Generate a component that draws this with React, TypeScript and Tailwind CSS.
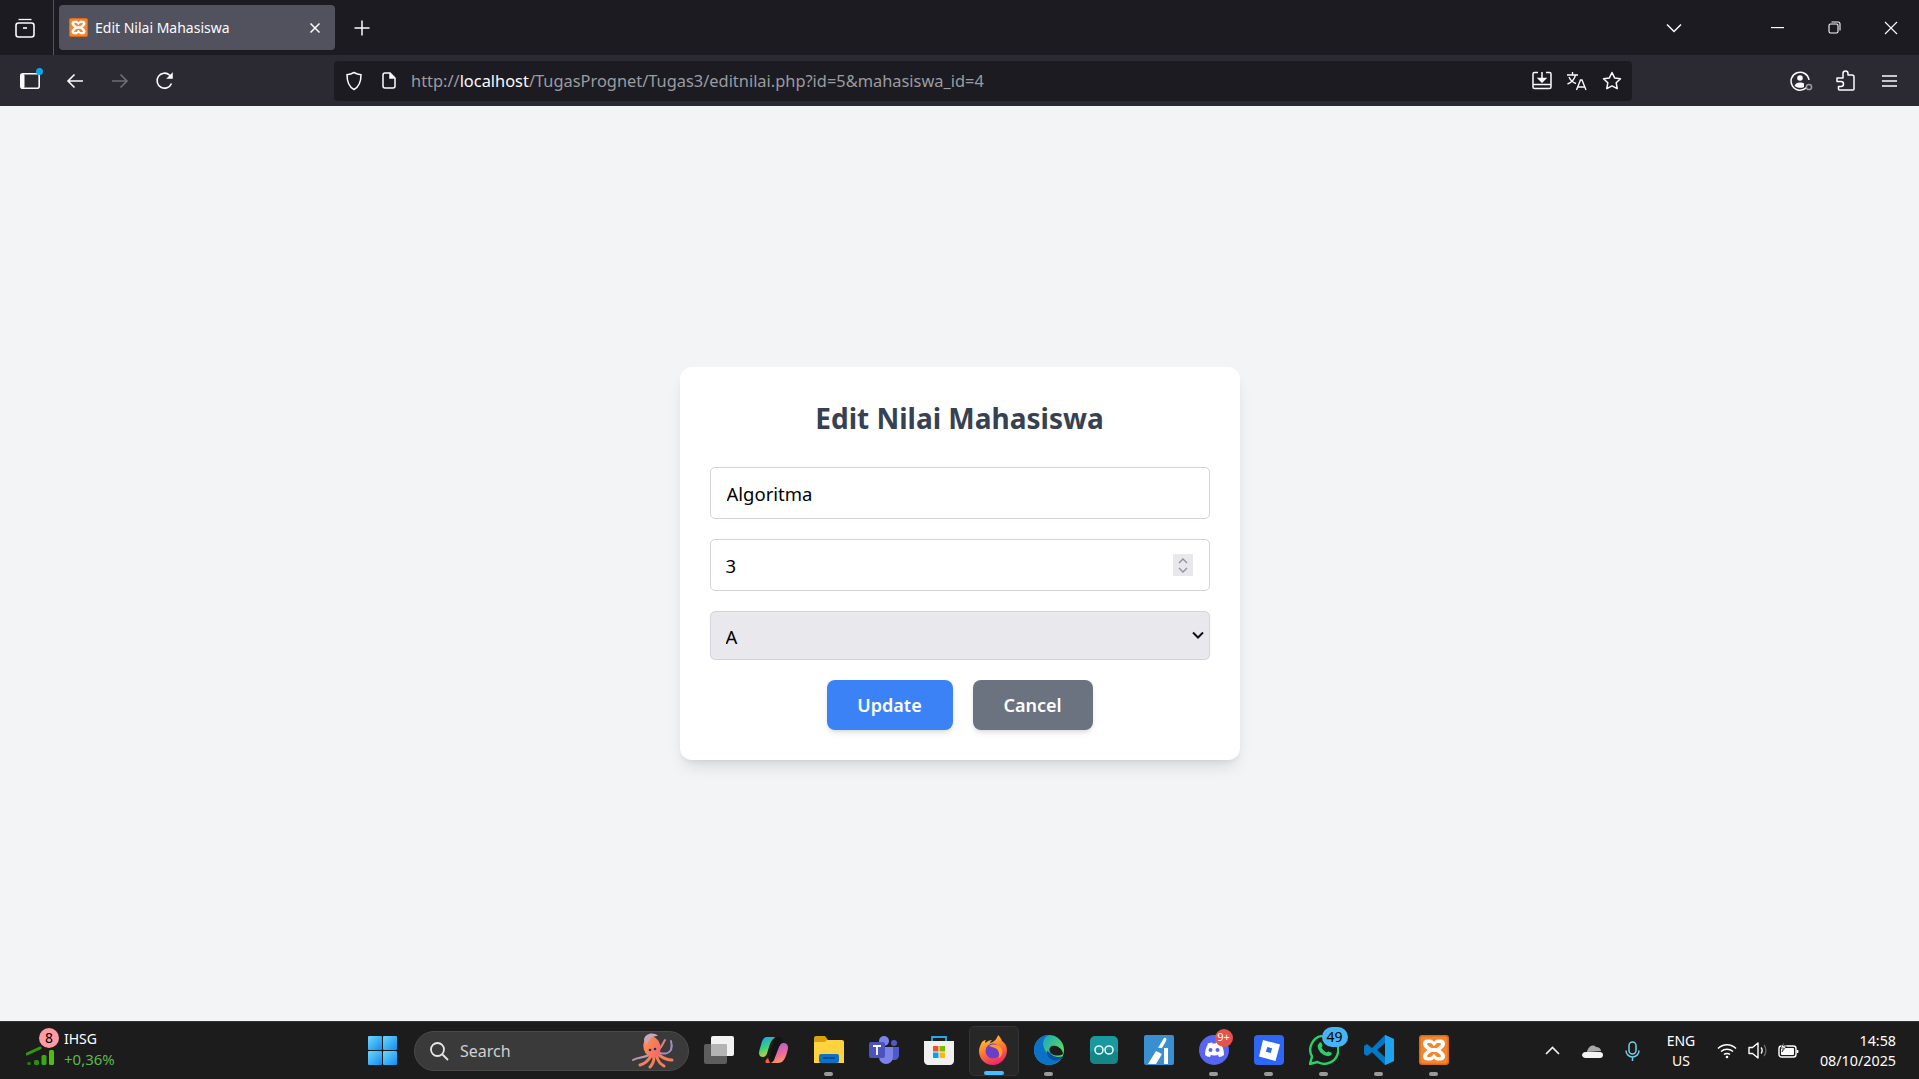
import { useState } from "react";

const uiFont = "font-['Noto_Sans','Open_Sans',sans-serif]";

function XamppIcon({ size }: { size: number }) {
  return (
    <svg width={size} height={size} viewBox="0 0 30 30">
      <rect x="0" y="0" width="30" height="30" rx="3" fill="#d96a1c" />
      <rect x="1.500" y="1.500" width="27" height="27" rx="2" fill="#f4862c" />
      <path d="M8 4.500h3.500c1.600 0 2.400 1 3.500 2.300 1.100-1.300 1.900-2.300 3.500-2.300H22c2.400 0 4 1.900 4 4.200 0 2.700-2.600 4.900-4.500 6.300 1.900 1.400 4.500 3.600 4.500 6.300 0 2.300-1.600 4.200-4 4.200h-3.500c-1.600 0-2.400-1-3.500-2.300-1.100 1.300-1.900 2.300-3.500 2.300H8c-2.400 0-4-1.900-4-4.200 0-2.700 2.600-4.900 4.500-6.300C6.600 13.600 4 11.400 4 8.700c0-2.300 1.600-4.200 4-4.200z" fill="#fff" />
      <path d="M9 8h2.500c1.200 0 2 1.500 3.500 3.300C16.500 9.500 17.300 8 18.500 8H21c1 0 1.300 1.200.5 2-1 1.200-2.500 2.200-3.800 3h-5.400c-1.300-.8-2.800-1.800-3.800-3-.8-.8-.5-2 .5-2z" fill="#f4862c" />
      <path d="M9 22h2.500c1.200 0 2-1.500 3.500-3.300 1.500 1.800 2.300 3.300 3.500 3.300H21c1 0 1.300-1.200.5-2-1-1.200-2.500-2.200-3.800-3h-5.400c-1.300.8-2.800 1.800-3.800 3-.8.8-.5 2 .5 2z" fill="#f4862c" />
    </svg>
  );
}

function TabBar() {
  return (
    <div className="flex h-[55px] shrink-0 items-center bg-[#1c1b22]">
      <div className="flex h-full w-[54px] items-center justify-center border-r border-[#55555c]">
        <svg width="22" height="22" viewBox="0 0 22 22" fill="none" stroke="#fbfbfe" strokeWidth="1.600" className="mr-[4px]">
          <path d="M4.500 2.500h13" strokeWidth="1.300" />
          <rect x="2" y="6" width="18" height="14" rx="2.500" />
          <path d="M9 11h4" />
        </svg>
      </div>
      <div className="ml-[5px] flex h-[45px] w-[276px] items-center rounded-[4px] bg-[#52525e] pl-[10px] pr-[14px]">
        <XamppIcon size={19} />
        <span className={`ml-[7px] flex-1 text-[14px] text-[#fbfbfe] ${uiFont}`}>Edit Nilai Mahasiswa</span>
        <svg width="12" height="12" viewBox="0 0 12 12" stroke="#fbfbfe" strokeWidth="1.500">
          <path d="M1.500 1.500l9 9M10.500 1.500l-9 9" />
        </svg>
      </div>
      <div className="ml-[17px] flex w-[20px] justify-center">
        <svg width="16" height="16" viewBox="0 0 16 16" stroke="#fbfbfe" strokeWidth="1.500">
          <path d="M8 0.500v15M0.500 8h15" />
        </svg>
      </div>
      <div className="ml-auto flex items-center">
        <svg width="16" height="10" viewBox="0 0 16 10" fill="none" stroke="#fbfbfe" strokeWidth="1.500">
          <path d="M1 1.500l7 7 7-7" />
        </svg>
        <svg width="13" height="2" viewBox="0 0 13 2" className="ml-[89px]">
          <rect width="13" height="1.200" fill="#fbfbfe" />
        </svg>
        <svg width="13" height="13" viewBox="0 0 13 13" fill="none" stroke="#fbfbfe" strokeWidth="1.100" className="ml-[44px]">
          <rect x="1" y="3" width="9" height="9" rx="1.500" />
          <path d="M3.500 1h6.500c1.200 0 2 .8 2 2v6.500" />
        </svg>
        <svg width="14" height="14" viewBox="0 0 14 14" stroke="#fbfbfe" strokeWidth="1.100" className="ml-[43px] mr-[21px]">
          <path d="M1 1l12 12M13 1L1 13" />
        </svg>
      </div>
    </div>
  );
}

function Toolbar() {
  return (
    <div className="flex h-[51px] shrink-0 items-center bg-[#2b2a33]">
      <div className="relative ml-[20px] h-[16px] w-[20px]">
        <svg width="20" height="16" viewBox="0 0 20 16">
          <rect x="0.800" y="0.800" width="18.400" height="14.400" rx="2" fill="none" stroke="#fbfbfe" strokeWidth="1.600" />
          <rect x="1" y="1" width="3.500" height="14" rx="1.500" fill="#fbfbfe" />
        </svg>
        <span className="absolute right-[-3px] top-[-5px] h-[7px] w-[7px] rounded-full bg-[#0ea5e9]" />
      </div>
      <svg width="18" height="16" viewBox="0 0 18 16" fill="none" stroke="#fbfbfe" strokeWidth="1.600" className="ml-[26px]">
        <path d="M17 8H2M8.500 1.500L2 8l6.500 6.500" />
      </svg>
      <svg width="18" height="16" viewBox="0 0 18 16" fill="none" stroke="#6f6e75" strokeWidth="1.600" className="ml-[27px]">
        <path d="M1 8h15M9.500 1.500L16 8l-6.500 6.500" />
      </svg>
      <svg width="20" height="20" viewBox="0 0 20 20" fill="none" stroke="#fbfbfe" strokeWidth="1.600" className="ml-[26px]">
        <path d="M16.500 12.500A7.500 7.500 0 1 1 14.500 4L17 6.500" />
        <path d="M17.500 1.500v6h-6" fill="#fbfbfe" strokeWidth="0.500" />
      </svg>
      <div className="ml-[159px] flex h-[40px] w-[1298px] items-center rounded-[4px] bg-[#1c1b22] pl-[11px] pr-[10px]">
        <svg width="18" height="20" viewBox="0 0 18 20" fill="none" stroke="#fbfbfe" strokeWidth="1.500">
          <path d="M9 1.500c2.500 1.500 4.500 2 7 2.200 0 6.500-1 11.500-7 14.800C3 15.200 2 10.200 2 3.700 4.500 3.500 6.500 3 9 1.500z" />
        </svg>
        <svg width="14" height="17" viewBox="0 0 14 17" fill="none" stroke="#fbfbfe" strokeWidth="1.500" className="ml-[19px]">
          <path d="M3 1h5l5 5v8c0 1.200-.8 2-2 2H3c-1.200 0-2-.8-2-2V3c0-1.200.8-2 2-2z" />
          <path d="M8 1v5h5" fill="#fbfbfe" />
        </svg>
        <span className={`ml-[15px] mt-[2px] flex-1 text-[16.400px] text-[#9b9ba0] ${uiFont}`}>
          http://<span className="text-[#fbfbfe]">localhost</span>/TugasPrognet/Tugas3/editnilai.php?id=5&amp;mahasiswa_id=4
        </span>
        <svg width="20" height="19" viewBox="0 0 20 19" fill="none" stroke="#fbfbfe" strokeWidth="1.500">
          <path d="M6 1.500H2.500c-.8 0-1.500.7-1.500 1.500v13c0 .8.700 1.500 1.500 1.500h15c.8 0 1.500-.7 1.500-1.500V3c0-.8-.7-1.500-1.500-1.500H14" />
          <path d="M1 13.500h18M10 1v8" />
          <path d="M6.500 7.500L10 11l3.500-3.500z" fill="#fbfbfe" />
        </svg>
        <svg width="21" height="20" viewBox="0 0 21 20" fill="none" stroke="#fbfbfe" strokeWidth="1.400" className="ml-[14px]">
          <path d="M1 4h11M6.500 1v3M9.500 4c-1 4-4 7.500-8 9M3 6c1.500 3.500 4 5.500 7 6.500" />
          <path d="M10.500 19l4-10h1.500l4 10M12 16h7" />
        </svg>
        <svg width="20" height="19" viewBox="0 0 20 19" fill="none" stroke="#fbfbfe" strokeWidth="1.500" className="ml-[15px]">
          <path d="M10 1.500l2.600 5.400 5.900.8-4.300 4.100 1 5.900L10 14.900l-5.200 2.800 1-5.900L1.500 7.700l5.900-.8z" strokeLinejoin="round" />
        </svg>
      </div>
      <svg width="23" height="21" viewBox="0 0 23 21" fill="none" stroke="#fbfbfe" strokeWidth="1.500" className="ml-[158px]">
        <path d="M16.500 17.500A9 9 0 1 1 19 10" />
        <circle cx="10" cy="8" r="2.800" fill="#fbfbfe" stroke="none" />
        <path d="M4.500 16c.5-2.500 3-3.500 5.500-3.500 1.500 0 3 .3 4 1v3.500c-2.500 1.500-6.500 1-9.500-1z" fill="#fbfbfe" stroke="none" />
        <circle cx="19" cy="17" r="2.600" stroke="#9b9ba0" />
      </svg>
      <svg width="19" height="21" viewBox="0 0 19 21" fill="none" stroke="#fbfbfe" strokeWidth="1.500" className="ml-[23px]">
        <path d="M7 5V3.500a2.500 2.500 0 0 1 5 0V5h4c1 0 2 .8 2 2v12c0 .6-.5 1-1 1H3.500c-.6 0-1-.4-1-1v-2.500H5a2.500 2.500 0 0 0 0-5H1V8h6z" strokeLinejoin="round" />
      </svg>
      <svg width="15" height="12" viewBox="0 0 15 12" stroke="#fbfbfe" strokeWidth="1.500" className="ml-[27px]">
        <path d="M0 1h15M0 6h15M0 11h15" />
      </svg>
    </div>
  );
}

function EditForm() {
  const [matkul, setMatkul] = useState("Algoritma");
  const [sks, setSks] = useState("3");
  const [nilai, setNilai] = useState("A");

  return (
    <form className={`flex h-[393px] w-[560px] flex-col rounded-xl bg-white px-[30px] pt-[30px] shadow-lg ${uiFont}`}>
      <h2 className="text-center text-[28px] leading-[42px] font-bold text-[#374151]">Edit Nilai Mahasiswa</h2>
      <input
        value={matkul}
        onChange={(e) => setMatkul(e.target.value)}
        className="mt-[28px] h-[52px] w-full rounded-[5px] border border-[#d1d5db] pl-[16px] pr-[15px] text-[18.500px] text-black outline-none"
      />
      <div className="relative mt-[20px]">
        <input
          value={sks}
          onChange={(e) => setSks(e.target.value)}
          className="h-[52px] w-full rounded-[5px] border border-[#d1d5db] px-[15px] text-[18.500px] text-black outline-none"
        />
        <div className="absolute right-[17px] top-[15px] flex h-[22px] w-[20px] flex-col items-center justify-center gap-[3px] bg-[#e8e8ec]">
          <svg width="10" height="6" viewBox="0 0 10 6" fill="none" stroke="#8f8f9d" strokeWidth="1.300">
            <path d="M1 5l4-4 4 4" />
          </svg>
          <svg width="10" height="6" viewBox="0 0 10 6" fill="none" stroke="#8f8f9d" strokeWidth="1.300">
            <path d="M1 1l4 4 4-4" />
          </svg>
        </div>
      </div>
      <div className="relative mt-[20px]">
        <select
          value={nilai}
          onChange={(e) => setNilai(e.target.value)}
          className="h-[49px] w-full appearance-none rounded-[5px] border border-[#d1d5db] bg-[#e8e8ed] px-[15px] pt-[2px] text-[18.500px] text-black outline-none"
        >
          <option>A</option>
          <option>B</option>
          <option>C</option>
          <option>D</option>
          <option>E</option>
        </select>
        <svg width="12" height="8" viewBox="0 0 12 8" fill="none" stroke="#111" strokeWidth="2" className="pointer-events-none absolute right-[6px] top-[20px]">
          <path d="M1 1.500l5 5 5-5" />
        </svg>
      </div>
      <div className="mt-[20px] flex justify-center gap-[20px]">
        <button type="button" className="h-[50px] w-[126px] rounded-lg bg-[#3b82f6] text-[18px] font-semibold text-white shadow-md">Update</button>
        <button type="button" className="h-[50px] w-[120px] rounded-lg bg-[#6b7280] text-[18px] font-semibold text-white shadow-md">Cancel</button>
      </div>
    </form>
  );
}

function TaskItem({ children, dot, active }: { children: React.ReactNode; dot?: boolean; active?: boolean }) {
  return (
    <div className={`relative flex h-[50px] shrink-0 items-center justify-center rounded-[5px] pb-[2px] ${active ? "mx-[2.500px] w-[50px] border border-[#333] bg-[#272727]" : "w-[55px]"}`}>
      {children}
      {dot ? <span className="absolute bottom-0 left-[23px] h-[4px] w-[9px] rounded-full bg-[#9a9a9a]" /> : null}
      {active ? <span className="absolute bottom-0 left-[14px] h-[4px] w-[20px] rounded-full bg-[#47bdff]" /> : null}
    </div>
  );
}

function Octopus() {
  return (
    <svg width="48" height="36" viewBox="0 0 48 36" fill="none">
      <defs>
        <linearGradient id="octo" x1="0" y1="0" x2="1" y2="1">
          <stop offset="0" stopColor="#ff9a4a" />
          <stop offset="1" stopColor="#f0606a" />
        </linearGradient>
      </defs>
      <g stroke="#f47f5a" strokeWidth="3" strokeLinecap="round">
        <path d="M18 22C12 25 7 24 2 27" stroke="#b79ab5" strokeWidth="2" />
        <path d="M20 23c-3 5-6 8-11 9" />
        <path d="M23 24c0 4-1 7-4 10" />
        <path d="M26 24c1 4 3 7 7 9" />
        <path d="M28 22c4 3 8 5 13 5" />
        <path d="M29 20c5 1 8 1 11-3 1-3 1-6 0-9" stroke="#a78bc9" strokeWidth="2" />
        <path d="M28 16c3-2 4-6 6-9" stroke="#e0808a" strokeWidth="2" />
      </g>
      <ellipse cx="21" cy="14" rx="8.500" ry="11" transform="rotate(-15 21 14)" fill="url(#octo)" />
      <path d="M13 6c2-6 10-7 14-3-5 0-9 2-11 9-2-2-3-4-3-6z" fill="#c9a6b8" />
      <circle cx="19" cy="17" r="1.300" fill="#2b2a66" />
      <circle cx="24" cy="16" r="1.300" fill="#2b2a66" />
    </svg>
  );
}

function Taskbar() {
  return (
    <div className="flex h-[58px] shrink-0 items-center border-t border-[#333] bg-[#1c1c1c]">
      {/* widget */}
      <div className="flex w-[355px] shrink-0 items-center">
        <div className="relative ml-[26px] h-[26px] w-[29px]">
          <svg width="29" height="26" viewBox="0 0 29 26" className="mt-[4px]">
            <path d="M1 12L14 6" stroke="#2f9a10" strokeWidth="3" strokeLinecap="round" />
            <rect x="1" y="20" width="4" height="3" rx="1.500" fill="#1e7d0c" />
            <rect x="8" y="18" width="5" height="5" rx="1.500" fill="#2a8f10" />
            <rect x="15.500" y="13" width="5" height="10" rx="1.500" fill="#3aa814" />
            <rect x="23" y="8" width="5" height="15" rx="1.500" fill="#55bb0f" />
          </svg>
          <span className={`absolute left-[13px] top-[-10px] flex h-[20px] w-[20px] items-center justify-center rounded-full bg-[#ff9aa2] text-[14px] text-black ${uiFont}`}>8</span>
        </div>
        <div className={`ml-[9px] mb-[3px] flex flex-col text-[14px] leading-[20px] ${uiFont}`}>
          <span className="text-white">IHSG</span>
          <span className="text-[15px] text-[#5cb84f]">+0,36%</span>
        </div>
      </div>
      {/* start */}
      <div className="flex w-[55px] shrink-0 justify-center">
        <svg width="29" height="29" viewBox="0 0 29 29">
          <defs>
            <linearGradient id="win" x1="0" y1="0" x2="1" y2="1">
              <stop offset="0" stopColor="#6fd6fb" />
              <stop offset="1" stopColor="#0f8cf0" />
            </linearGradient>
          </defs>
          <rect width="14" height="14" rx="1" fill="url(#win)" />
          <rect x="15" width="14" height="14" rx="1" fill="url(#win)" />
          <rect y="15" width="14" height="14" rx="1" fill="url(#win)" />
          <rect x="15" y="15" width="14" height="14" rx="1" fill="url(#win)" />
        </svg>
      </div>
      {/* search */}
      <div className="ml-[4px] flex h-[40px] w-[275px] shrink-0 items-center rounded-full border border-[#4a4a4a] bg-[#3a3a3a] pl-[14px] pr-[9px]">
        <svg width="20" height="20" viewBox="0 0 20 20" fill="none" stroke="#e6e6e6" strokeWidth="1.800">
          <circle cx="8.500" cy="8.500" r="6.500" />
          <path d="M13.500 13.500L19 19" />
        </svg>
        <span className={`ml-[11px] flex-1 text-[16px] text-[#d0d0d0] ${uiFont}`}>Search</span>
        <Octopus />
      </div>
      {/* pinned */}
      <div className="ml-[2px] flex items-center">
        <TaskItem>
          <svg width="30" height="28" viewBox="0 0 30 28">
            <rect x="0" y="8" width="23" height="20" rx="2" fill="#5d5d5d" />
            <rect x="7" y="0" width="23" height="20" rx="2" fill="#f2f2f2" />
            <rect x="7" y="8" width="16" height="12" rx="1" fill="#b4b4b4" />
          </svg>
        </TaskItem>
        <TaskItem>
          <svg width="29" height="28" viewBox="0 0 29 28">
            <defs>
              <linearGradient id="cpA" x1="0.200" y1="0" x2="0.600" y2="1">
                <stop offset="0" stopColor="#1f9ff0" />
                <stop offset="0.500" stopColor="#38d27a" />
                <stop offset="1" stopColor="#f5d020" />
              </linearGradient>
              <linearGradient id="cpB" x1="0.300" y1="0" x2="0.700" y2="1">
                <stop offset="0" stopColor="#a05ce0" />
                <stop offset="0.600" stopColor="#f06a9a" />
                <stop offset="1" stopColor="#fca04a" />
              </linearGradient>
            </defs>
            <path d="M7 1c-3 1-4 4-5 8-1 3-2 6-2 8 0 3 2 4 4 4 3 0 4-3 5-7l2-6c1-3 3-6 7-7z" fill="url(#cpA)" />
            <path d="M9 27c3 0 5-1 6-3l5-13c1-2 2-4 4-4 3 0 5 1 5 5-1 6-3 11-5 13-1 1-3 2-5 2z" fill="url(#cpB)" />
            <path d="M16 1h4c3 0 4 2 4 6-3 0-4 2-5 5l-4 11c-1 3-3 4-6 4H6c2-1 3-2 4-5l3-10c1-4 2-9 3-11z" fill="#141414" />
            <path d="M9 22l2 5H7c-1-1-1-3 2-5z" fill="#f0603a" />
          </svg>
        </TaskItem>
        <TaskItem dot>
          <svg width="30" height="27" viewBox="0 0 30 27">
            <path d="M0 2c0-1 .8-2 2-2h9l3 4v4H0z" fill="#d9a40b" />
            <path d="M0 27V6h11l2-2h15c1 0 2 .8 2 2v21z" fill="#ffd23f" />
            <rect x="5" y="18" width="20" height="9" rx="2" fill="#0c72c8" />
            <path d="M9 22h12" stroke="#063f80" strokeWidth="1.500" />
          </svg>
        </TaskItem>
        <TaskItem>
          <svg width="30" height="28" viewBox="0 0 30 28">
            <circle cx="15" cy="5" r="5" fill="#7b83eb" />
            <circle cx="25" cy="7" r="3" fill="#5059c9" />
            <path d="M21 11h9v8c0 3-2 5-5 5h-4z" fill="#5059c9" />
            <path d="M8 11h16v10a7 7 0 0 1-14 0z" fill="#7b83eb" />
            <rect x="0" y="6" width="16" height="16" rx="2" fill="#4b53bc" />
            <path d="M4 10h8M8 10v9" stroke="#fff" strokeWidth="1.800" />
          </svg>
        </TaskItem>
        <TaskItem>
          <svg width="30" height="30" viewBox="0 0 30 30">
            <path d="M8 6V2h14v4" fill="none" stroke="#28a8ea" strokeWidth="1.800" />
            <path d="M0 6h30v20c0 2-2 4-4 4H4c-2 0-4-2-4-4z" fill="#f0f0f0" />
            <rect x="9" y="11" width="5.500" height="5.500" fill="#f25022" />
            <rect x="15.500" y="11" width="5.500" height="5.500" fill="#7fba00" />
            <rect x="9" y="17.500" width="5.500" height="5.500" fill="#00a4ef" />
            <rect x="15.500" y="17.500" width="5.500" height="5.500" fill="#ffb900" />
          </svg>
        </TaskItem>
        <TaskItem active>
          <svg width="29" height="30" viewBox="0 0 29 30">
            <defs>
              <linearGradient id="ffx" x1="0.200" y1="0" x2="0.600" y2="1">
                <stop offset="0" stopColor="#ffd23a" />
                <stop offset="0.500" stopColor="#ff7a2e" />
                <stop offset="1" stopColor="#f0226e" />
              </linearGradient>
            </defs>
            <path d="M2 9c1-3 3-4 5-4-1 1-1 2-.5 3C8 6 11 5 13 5c-1 1-2 2-2 3 4-1 7-4 8-8 2 2 3 3 4 6 3 2 5 5 5 9 0 8-6 15-14 15C6 30 0 24 0 16c0-3 1-5 2-7z" fill="url(#ffx)" />
            <circle cx="14" cy="16" r="7.500" fill="#6a3fc8" />
            <path d="M10 11c5-3 11-1 13 3 1 3 0 7-3 9 1-5-1-9-4-10-2-1-4-1-6-2z" fill="#ff9a2a" />
          </svg>
        </TaskItem>
        <TaskItem dot>
          <svg width="30" height="30" viewBox="0 0 30 30">
            <defs>
              <linearGradient id="edgeA" x1="0.200" y1="0" x2="1" y2="0.600">
                <stop offset="0" stopColor="#14a0c8" />
                <stop offset="1" stopColor="#5be05b" />
              </linearGradient>
            </defs>
            <circle cx="15" cy="15" r="15" fill="url(#edgeA)" />
            <path d="M0 15C0 6 7 0 15 0 7 3 8 12 13 18c3 5 10 7 15 4-3 5-8 8-13 8C6 30 0 23 0 15z" fill="#0c72c8" />
            <path d="M29 19c-3 2-8 2-11 0-3-2-4-6 0-8 3-1 6 0 9 3 1 2 2 3 2 5z" fill="#1c1c1c" />
            <path d="M13 16c-1 6 5 11 12 9 2-1 3-2 4-4-4 2-9 1-12-2-2-2-3-3-4-3z" fill="#0a4f9e" />
          </svg>
        </TaskItem>
        <TaskItem>
          <svg width="28" height="28" viewBox="0 0 28 28">
            <rect width="28" height="28" rx="5" fill="#1a9a9e" />
            <rect y="14" width="28" height="14" rx="5" fill="#148688" />
            <circle cx="9" cy="14" r="4" fill="none" stroke="#e5f5f5" strokeWidth="1.600" />
            <circle cx="19" cy="14" r="4" fill="none" stroke="#e5f5f5" strokeWidth="1.600" />
          </svg>
        </TaskItem>
        <TaskItem>
          <svg width="30" height="30" viewBox="0 0 30 30">
            <rect width="30" height="30" rx="2" fill="#3a8fd0" />
            <path d="M20 3c2-1 3 1 2 3l-4 7h-4z" fill="#fff" />
            <path d="M4 29l8-13 6 3-6 10z" fill="#fff" />
            <path d="M20 13h4v16h-4z" fill="#fff" />
          </svg>
        </TaskItem>
        <TaskItem dot>
          <div className="relative">
            <svg width="30" height="30" viewBox="0 0 30 30">
              <circle cx="15" cy="15" r="15" fill="#5865f2" />
              <path d="M8 9c2-1 4-1.500 5-1.500l.5 1h3l.5-1c1 0 3 .5 5 1.500 2 3 3 7 3 11-1.500 1-3 2-5 2l-1-2c.5 0 1-.3 1.500-.6-3 1.300-7 1.300-10 0 .5.300 1 .6 1.500.6l-1 2c-2 0-3.500-1-5-2 0-4 1-8 3-11z" fill="#fff" />
              <circle cx="11.500" cy="15" r="2" fill="#5865f2" />
              <circle cx="18.500" cy="15" r="2" fill="#5865f2" />
            </svg>
            <span className={`absolute left-[16px] top-[-6px] flex h-[18px] w-[18px] items-center justify-center rounded-full bg-[#e5534b] text-[11px] text-white ${uiFont}`}>9+</span>
          </div>
        </TaskItem>
        <TaskItem dot>
          <svg width="30" height="30" viewBox="0 0 30 30">
            <rect width="30" height="30" rx="4" fill="#2f66f5" />
            <path d="M9 5l17 4.500-4.500 16.500L5 21.500z" fill="#fff" />
            <rect x="12.500" y="12.500" width="5" height="5" fill="#2f66f5" transform="rotate(15 15 15)" />
          </svg>
        </TaskItem>
        <TaskItem dot>
          <div className="relative">
            <svg width="30" height="30" viewBox="0 0 30 30">
              <path d="M1 29l2-7.500A14 14 0 1 1 8.500 27z" fill="#1c1c1c" stroke="#25d366" strokeWidth="2.400" strokeLinejoin="round" />
              <path d="M10 8c1-1 2-1 2.500 0l1 2.500c.2.600-.8 1.500-1 2 1 2 3 4 5 5 .5-.3 1.400-1.300 2-1l2.500 1c1 .5 1 1.500 0 2.500-1.500 1.500-4 1.500-7 0-3-1.500-5-4-6-6.500-.6-2-.5-4 1.500-5.500z" fill="#25d366" />
            </svg>
            <span className={`absolute left-[13px] top-[-8px] flex h-[20px] w-[26px] items-center justify-center rounded-full bg-[#47b5f5] text-[14px] text-black ${uiFont}`}>49</span>
          </div>
        </TaskItem>
        <TaskItem dot>
          <svg width="30" height="30" viewBox="0 0 30 30">
            <path d="M21 0l9 4v22l-9 4L8 17l-5 4-3-2V11l3-2 5 4z" fill="#0078c8" />
            <path d="M21 0l9 4v22l-9 4z" fill="#1ea4ec" />
            <path d="M21 8v14l-8-7z" fill="#1c1c1c" />
          </svg>
        </TaskItem>
        <TaskItem dot>
          <XamppIcon size={30} />
        </TaskItem>
      </div>
      {/* tray */}
      <div className="ml-auto flex items-center">
        <div className="flex w-[39px] justify-center">
          <svg width="15" height="9" viewBox="0 0 15 9" fill="none" stroke="#f0f0f0" strokeWidth="1.700">
            <path d="M1 8l6.500-6.500L14 8" />
          </svg>
        </div>
        <div className="flex w-[40px] justify-center">
          <svg width="21" height="14" viewBox="0 0 21 14">
            <path d="M5 8a4 4 0 0 1 .5-2C7 2 11 0 14 3c3 0 5 2 5 4z" fill="#a8a8a8" />
            <path d="M3.500 14C1.500 14 0 12.500 0 11s1.500-3 3.500-3H18c1.700 0 3 1.300 3 3s-1.300 3-3 3z" fill="#f4f4f4" />
          </svg>
        </div>
        <div className="flex w-[41px] justify-center">
          <svg width="15" height="20" viewBox="0 0 15 20" fill="none" stroke="#6fcfe8" strokeWidth="1.500">
            <rect x="4" y="1" width="7" height="12" rx="3.500" />
            <path d="M1 9.500a6.500 6.500 0 0 0 13 0M7.500 16v4" />
          </svg>
        </div>
        <div className={`flex w-[56px] flex-col items-center text-[14px] leading-[20px] text-white ${uiFont}`}>
          <span>ENG</span>
          <span>US</span>
        </div>
        <div className="flex w-[35px] justify-center">
          <svg width="20" height="16" viewBox="0 0 20 16" fill="none" stroke="#fff" strokeWidth="1.500">
            <path d="M1 5.500c5-5 13-5 18 0M4 8.500c3.500-3 8.500-3 12 0M7 11.500c1.500-1.300 4.500-1.300 6 0" />
            <circle cx="10" cy="14" r="1.300" fill="#fff" stroke="none" />
          </svg>
        </div>
        <div className="flex w-[27px] justify-center">
          <svg width="20" height="17" viewBox="0 0 20 17" fill="none" stroke="#fff" strokeWidth="1.400">
            <path d="M1 5.500h3.500L10 1v15l-5.500-4.500H1z" strokeLinejoin="round" />
            <path d="M13 5.500c1.500 1.500 1.500 4.500 0 6" />
            <path d="M16 3c2.500 3 2.500 8 0 11" stroke="#666" />
          </svg>
        </div>
        <div className="flex w-[34px] justify-center">
          <svg width="21" height="17" viewBox="0 0 21 17" fill="none" stroke="#fff" strokeWidth="1.400">
            <rect x="1" y="4" width="17" height="11" rx="2.500" />
            <rect x="3" y="6" width="13" height="7" rx="1" fill="#fff" stroke="none" />
            <path d="M19.500 8v3" strokeWidth="1.800" />
            <path d="M6 0L2.500 6h3L4 10l4.500-6h-3z" fill="#fff" stroke="#1c1c1c" strokeWidth="0.700" />
          </svg>
        </div>
        <div className={`flex w-[91px] flex-col items-end text-[14.300px] leading-[20px] text-white ${uiFont}`}>
          <span>14:58</span>
          <span>08/10/2025</span>
        </div>
        <div className="w-[23px]" />
      </div>
    </div>
  );
}

export default function App() {
  return (
    <div className="flex h-screen w-full flex-col overflow-hidden bg-[#f3f4f6]">
      <TabBar />
      <Toolbar />
      <main className="flex flex-1 items-center justify-center">
        <EditForm />
      </main>
      <Taskbar />
    </div>
  );
}
